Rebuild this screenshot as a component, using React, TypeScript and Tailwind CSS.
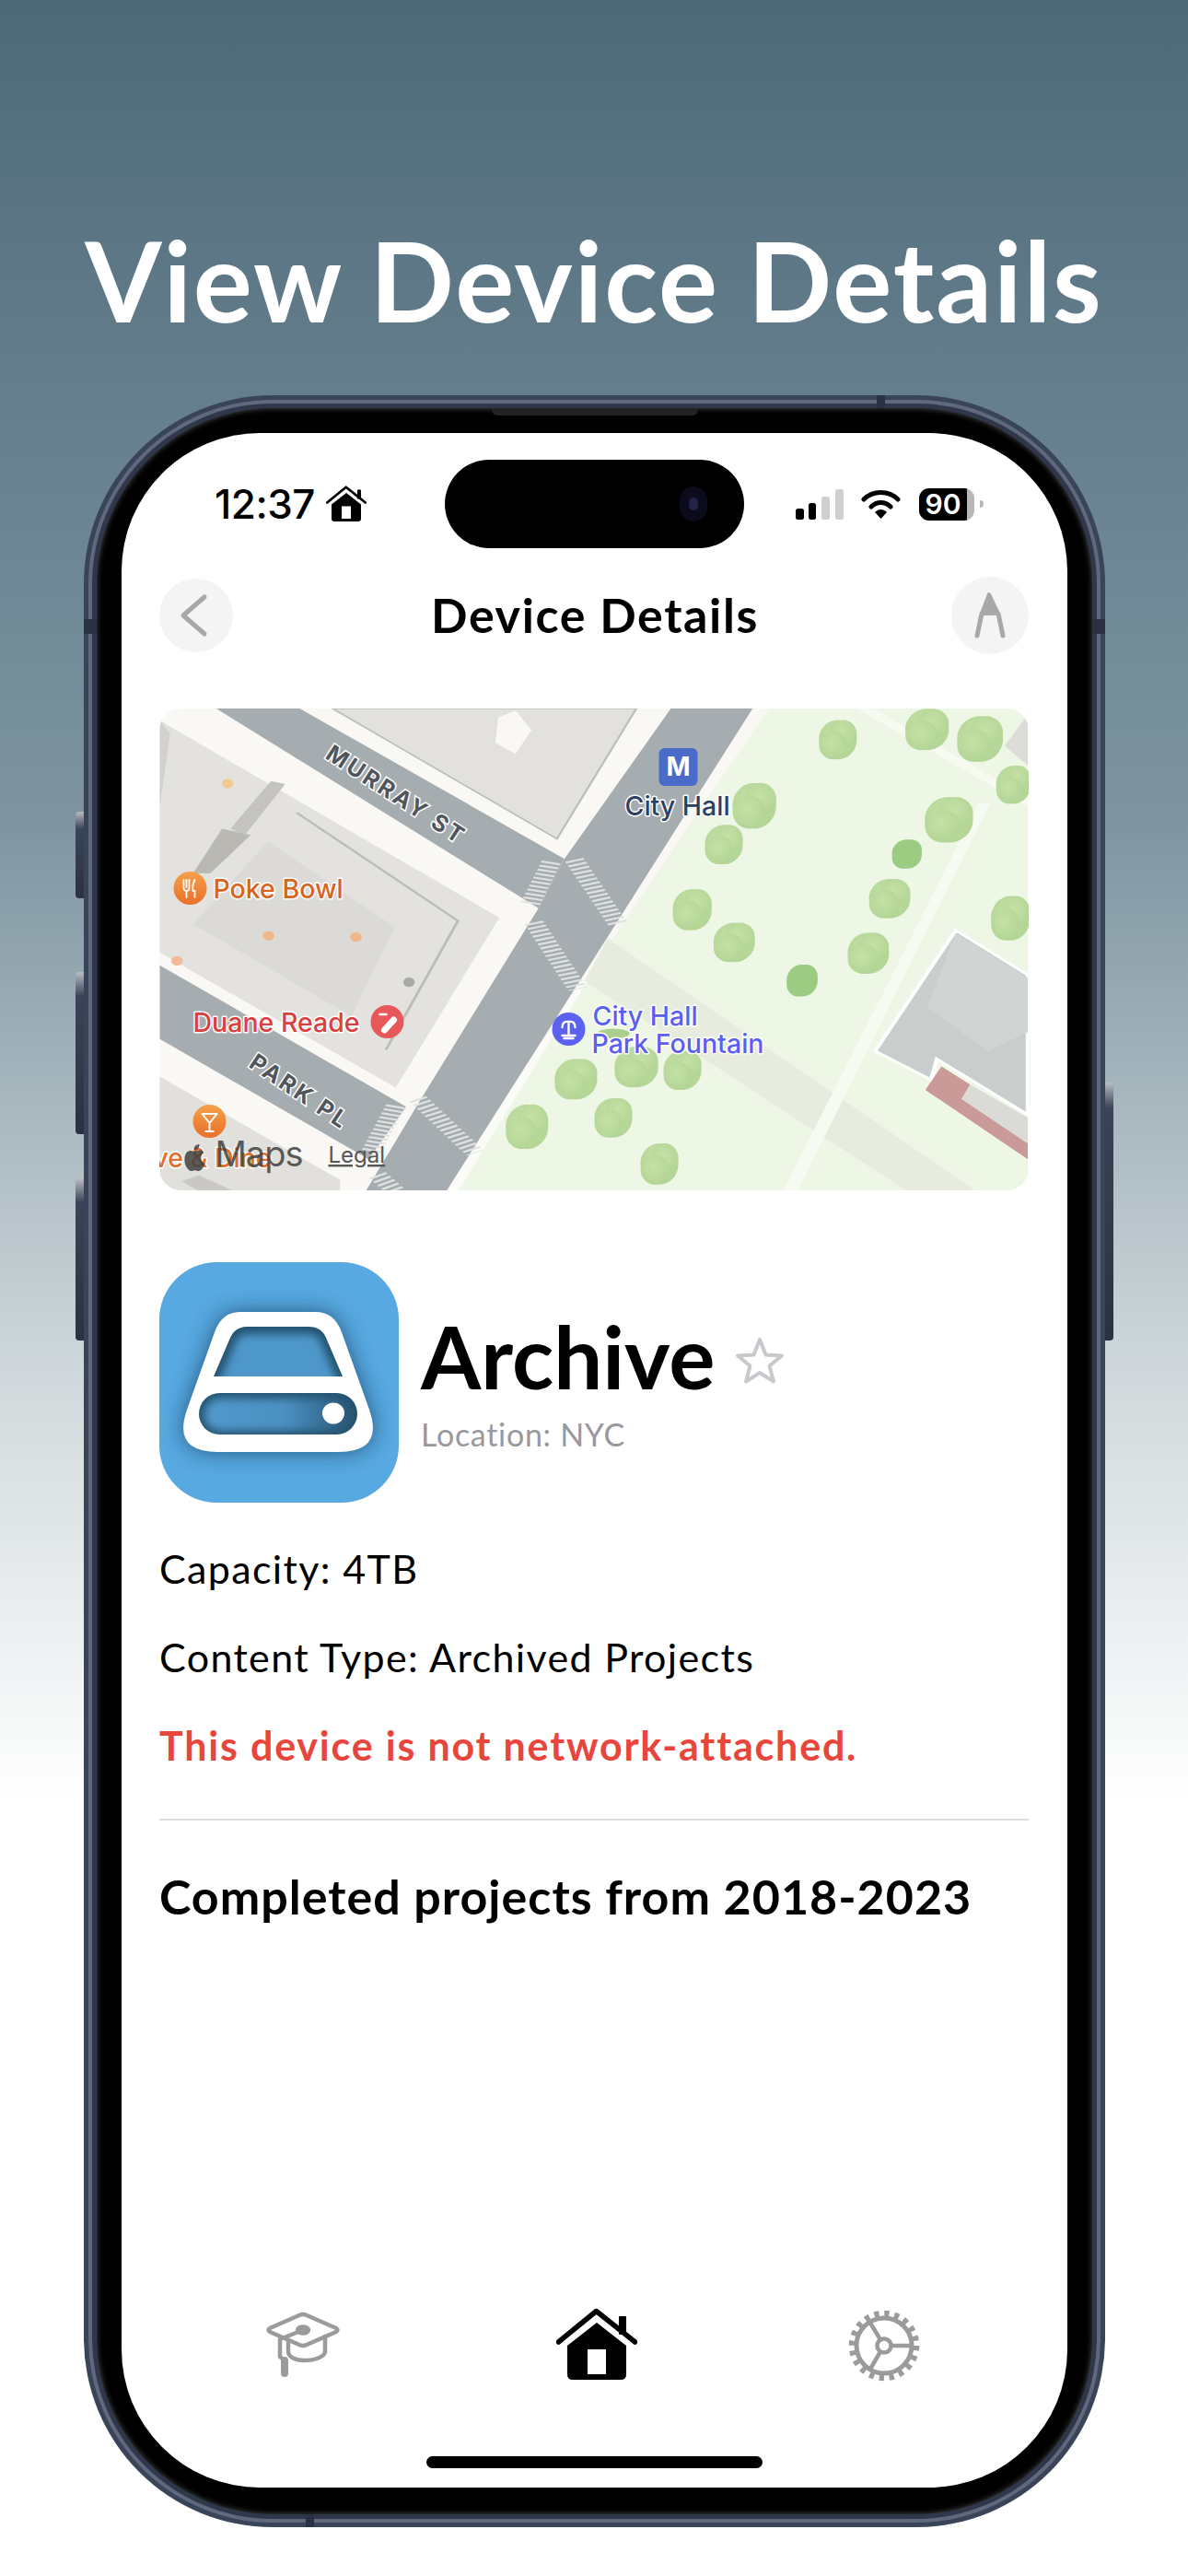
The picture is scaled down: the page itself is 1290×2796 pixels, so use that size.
const trees: [number, number, number, number, boolean?][] = [
  [1200, 120, 33, 62],
  [1355, 88, 38, 65],
  [1447, 118, 40, 72],
  [1505, 262, 30, 60],
  [1055, 328, 38, 72],
  [1002, 450, 33, 62],
  [1393, 372, 42, 72],
  [1320, 480, 26, 46, true],
  [1290, 620, 36, 62],
  [947, 655, 34, 65],
  [1020, 758, 36, 62],
  [1253, 792, 36, 65],
  [1138, 878, 27, 50, true],
  [1500, 682, 34, 70],
  [745, 1188, 37, 64],
  [850, 1150, 38, 64],
  [930, 1160, 33, 62],
  [810, 1310, 33, 62],
  [660, 1338, 37, 70],
  [890, 1455, 33, 65],
];

const crossings = [
  "M702 505 L665 640",
  "M742 498 L818 700",
  "M672 695 L748 905",
  "M432 1272 L388 1420",
  "M470 1250 L570 1420",
  "M400 1490 L432 1540",
];

const halo = { paintOrder: "stroke" as const, stroke: "#fff", strokeWidth: 3, strokeLinejoin: "round" as const };

const MapView = () => {
  return (
    <svg viewBox="0 0 943 523" className="w-full h-full block" fontFamily="Inter, sans-serif">
      <defs>
        <radialGradient id="tree" cx="45%" cy="40%" r="70%">
          <stop offset="0%" stopColor="#c6e1a6" />
          <stop offset="100%" stopColor="#afd393" />
        </radialGradient>
        <linearGradient id="orange" x1="0" y1="0" x2="0" y2="1">
          <stop offset="0%" stopColor="#f5a04a" />
          <stop offset="100%" stopColor="#e9702a" />
        </linearGradient>
      </defs>
      <rect width="943" height="523" fill="#f9f8f4" />
      <g transform="translate(-13.75 -7.6) scale(.625 .345)">
        {/* park */}
        <path d="M1080 22 H1530 V1540 H540 L810 740 Z" fill="#eef6e6" />
        <path d="M800 745 L1440 1540 H1320 L760 880 Z" fill="#e7ecdf" />
        <path d="M1465 320 L1130 1540 H1105 L1445 320 Z" fill="#f6faf1" />
        <path d="M1262 22 L1530 300 V330 L1232 22 Z" fill="#f6faf1" />
        <path d="M765 880 L540 1540 H522 L745 880 Z" fill="#fbfcf8" />
        {/* building in the park */}
        <path d="M1405 720 L1530 860 V1300 L1440 1200 L1372 1125 L1362 1190 L1265 1100 Z" fill="#c9cecc" stroke="#fff" strokeWidth="7" />
        <path d="M1405 730 L1355 960 L1460 1100 L1530 1040 V870 Z" fill="#d0d4d2" />
        <path d="M1380 1148 L1430 1205 L1415 1250 L1530 1390 V1440 L1352 1222 Z" fill="#c99a98" />
        <path d="M1430 1205 L1530 1310 V1390 L1415 1250 Z" fill="#dadad6" />
        <path d="M1530 40 V200 L1490 140 Z" fill="#dcdcd8" />
        {/* blocks */}
        <path d="M322 22 H850 L712 432 Z" fill="#e2e1dd" stroke="#bdbdba" strokeWidth="4" />
        <path d="M610 50 L640 28 L668 90 L640 165 L605 130 Z" fill="#f9f8f4" />
        <path d="M22 60 L612 680 L432 1215 L22 790 Z" fill="#e3e2de" />
        <path d="M210 440 L430 710 L355 990 L80 700 Z" fill="#dbdad6" />
        <path d="M260 350 L540 690 L415 1095" fill="none" stroke="#bcbcb8" strokeWidth="5" />
        <path d="M22 60 L40 100 L22 330 Z" fill="#d2d1cd" />
        <path d="M130 400 L180 420 L110 540 L80 540 Z" fill="#b9b8b3" />
        <path d="M240 260 L170 420 L145 400 L215 250 Z" fill="#c4c3bf" />
        <path d="M22 1180 L335 1505 V1540 H22 Z" fill="#e1e0dc" />
        <path d="M60 1510 L90 1490 L150 1540 H90 Z" fill="#c9c8c4" />
        {/* roads */}
        <path d="M120 22 H265 L725 495 L680 650 Z" fill="#a6adb0" />
        <path d="M910 22 H1052 L520 1540 H380 L472 1262 L680 650 L725 495 Z" fill="#a6adb0" />
        <path d="M22 830 L450 1275 L385 1440 L22 1062 Z" fill="#a6adb0" />
        {crossings.map((d) => (
          <path key={d} d={d} fill="none" stroke="#dfe2e1" strokeWidth="34" strokeDasharray="6 7" />
        ))}
        {trees.map(([cx, cy, rx, ry, dark]) => (
          <g key={`${cx}-${cy}`} fill={dark ? "#9ccb82" : "url(#tree)"}>
            <ellipse cx={cx} cy={cy} rx={rx} ry={ry} />
            <ellipse cx={cx + rx * 0.28} cy={cy - ry * 0.28} rx={rx * 0.72} ry={ry * 0.72} />
            <ellipse cx={cx - rx * 0.25} cy={cy + ry * 0.28} rx={rx * 0.74} ry={ry * 0.72} />
          </g>
        ))}
        <ellipse cx="140" cy="258" rx="10" ry="15" fill="#f2c98e" />
        <ellipse cx="211" cy="737" rx="10" ry="15" fill="#f0b78b" />
        <ellipse cx="363" cy="741" rx="10" ry="15" fill="#f0b78b" />
        <ellipse cx="52" cy="816" rx="10" ry="15" fill="#f3b999" />
        <ellipse cx="455" cy="883" rx="10" ry="15" fill="#a9a9a7" />
        <ellipse cx="810" cy="1045" rx="28" ry="16" fill="#a9cf8c" />
      </g>

      <g fontWeight="700" fill="#50565c" stroke="#fff" strokeWidth="3" style={{ paintOrder: "stroke" }}>
        <text transform="translate(252 101) rotate(33)" textAnchor="middle" fontSize="25" letterSpacing="3">MURRAY ST</text>
        <text transform="translate(147 423) rotate(34)" textAnchor="middle" fontSize="25" letterSpacing="3">PARK PL</text>
      </g>

      <circle cx="33" cy="195" r="18" fill="url(#orange)" />
      <path d="M26 186 V194 Q26 198 29 198 V205 M29 186 V194 M32 186 V194 Q32 198 29 198 M38 186 Q35 192 36 198 H38 V205" fill="none" stroke="#fff" strokeWidth="1.8" strokeLinecap="round" />
      <text x="58" y="206" fontSize="28.5" fontWeight="500" fill="#d8641e" style={halo}>Poke Bowl</text>

      <text x="36" y="351" fontSize="28.5" fontWeight="500" fill="#d9403f" style={halo}>Duane Reade</text>
      <circle cx="247" cy="340" r="18" fill="#e8575a" />
      <path d="M239 332 H246" stroke="#fff" strokeWidth="2.5" strokeLinecap="round" />
      <path d="M244 349 L254 338" stroke="#fff" strokeWidth="7" strokeLinecap="round" />

      <rect x="542" y="43" width="42" height="41" rx="6" fill="#4a6cc8" />
      <text x="563" y="73" textAnchor="middle" fontSize="28" fontWeight="700" fill="#fff">M</text>
      <text x="505" y="116" fontSize="28.5" fontWeight="500" fill="#2e3f63" style={halo}>City Hall</text>

      <circle cx="444" cy="348" r="18" fill="#5b62f0" />
      <path d="M444 340 V355 M437 346 Q437 339 444 340 Q451 339 451 346 M437 355 H451 M439 358 H449" fill="none" stroke="#fff" strokeWidth="2.4" strokeLinecap="round" />
      <text x="470" y="344" fontSize="28.5" fontWeight="500" fill="#5a5ff0" style={halo}>City Hall</text>
      <text x="469" y="374" fontSize="28.5" fontWeight="500" fill="#5a5ff0" style={halo}>Park Fountain</text>

      <circle cx="54" cy="448" r="18" fill="url(#orange)" />
      <path d="M46 440 H62 L54 450 Z M54 450 V459 M49 459 H59" fill="none" stroke="#fff" strokeWidth="2" strokeLinejoin="round" />
      <text x="-7" y="498" fontSize="28.5" fontWeight="500" fill="#e0702b" style={halo}>ve &amp; Dine</text>

      <path d="M37 481 C33 479 28 480 27 488 C26 495 31 503 35 502 C37 501 39 501 41 502 C45 503 48 497 49 494 C44 492 43 485 48 482 C45 478 41 480 37 481 Z M37 479 C37 475 40 473 43 473 C43 477 41 479 37 479 Z" fill="#3f3f3f" opacity=".85" />
      <text x="60" y="497" fontSize="38" fill="#3f3f3f" fillOpacity=".85" letterSpacing="-1">Maps</text>
      <text x="183" y="493" fontSize="24" fill="#555" textDecoration="underline">Legal</text>
    </svg>
  );
};

const HomeGlyph = ({ className }: { className: string }) => {
  return (
    <svg viewBox="11 16 88 80" className={className}>
      <path d="M13.5 53 L54.5 19.5 L96.5 53" fill="none" stroke="#000" strokeWidth="5.5" strokeLinecap="round" strokeLinejoin="round" />
      <rect x="79" y="25" width="8" height="20" rx="1" fill="#000" />
      <path fillRule="evenodd" d="M55 32 L87 57 V88 Q87 94 81 94 H29 Q23 94 23 88 V57 Z M45 61 V88 H65 V61 Z" fill="#000" />
    </svg>
  );
};

const CapIcon = () => {
  return (
    <svg viewBox="0 0 120 110" className="w-[120px] h-[110px]" fill="none" stroke="#9b9b9b" strokeWidth="4.5" strokeLinecap="round" strokeLinejoin="round">
      <path d="M55 23 Q59 21 63 23 L95 37 Q98 39 95 41 L63 55 Q59 57 55 55 L23 41 Q20 39 23 37 Z" />
      <path d="M43 50 V62 C43 68 50 72 60 72 C72 72 83 68 83 62 V46" />
      <path d="M59 39 L34 49 V68 L39 72" />
      <ellipse cx="59" cy="39" rx="6" ry="3.5" fill="#9b9b9b" />
      <path d="M39 72 V86" strokeWidth="8" />
    </svg>
  );
};

const GearIcon = () => {
  return (
    <svg viewBox="0 0 120 110" className="w-[120px] h-[110px]" fill="none" stroke="#9b9b9b">
      <circle cx="55" cy="56" r="30" strokeWidth="5" />
      <circle cx="55" cy="56" r="34.5" strokeWidth="7.5" strokeDasharray="5.2 5.64" />
      <circle cx="55" cy="56" r="7.5" strokeWidth="4.5" />
      <path d="M62.5 56 H84 M51 49.5 L38 28 M51 62.5 L39 83" strokeWidth="4.5" />
    </svg>
  );
};

const DriveIcon = () => {
  const body = "M88 54 H170 Q190 54 198 76 L228 160 Q244 206 195 206 H63 Q14 206 30 160 L60 76 Q68 54 88 54 Z";
  return (
    <svg viewBox="0 0 260 261" className="w-[260px] h-[261px] shrink-0">
      <defs>
        <filter id="glow" x="-30%" y="-30%" width="160%" height="160%">
          <feGaussianBlur stdDeviation="12" />
        </filter>
        <filter id="soft" x="-30%" y="-30%" width="160%" height="160%">
          <feGaussianBlur stdDeviation="5" />
        </filter>
        <linearGradient id="slot" x1="0" y1="0" x2="1" y2="0">
          <stop offset="0%" stopColor="#5099cd" />
          <stop offset="55%" stopColor="#4b90c2" />
          <stop offset="100%" stopColor="#2a5675" />
        </linearGradient>
        <clipPath id="slotClip">
          <rect x="43" y="142" width="172" height="45" rx="22.5" />
        </clipPath>
        <clipPath id="winClip">
          <path d="M59 124 L77 82 Q82 70 96 70 H162 Q176 70 181 82 L199 124 Z" />
        </clipPath>
      </defs>
      <rect width="260" height="261" rx="62" fill="#58a9e1" />
      <path d={body} fill="#1c4a6d" opacity=".85" filter="url(#glow)" />
      <path d={body} fill="#fff" />
      <g clipPath="url(#winClip)">
        <rect x="50" y="64" width="160" height="64" fill="#24536f" />
        <path d="M62 136 L84 84 Q88 78 98 78 H160 Q170 78 174 84 L196 136 Z" fill="#4e97ca" filter="url(#soft)" />
      </g>
      <g clipPath="url(#slotClip)">
        <rect x="43" y="142" width="172" height="45" fill="#24536f" />
        <rect x="49" y="148" width="160" height="35" rx="17" fill="url(#slot)" filter="url(#soft)" />
      </g>
      <ellipse cx="189" cy="164" rx="12" ry="11.5" fill="#fff" />
    </svg>
  );
};

const Band = ({ className }: { className: string }) => {
  return <div className={`absolute bg-[#2a3142] ${className}`} />;
};

const App = () => {
  return (
    <div className="w-[1290px] h-[2796px] overflow-hidden bg-[linear-gradient(180deg,#4d6979_0%,#7e95a1_32%,#d2dadd_54%,#ffffff_70%)] font-['Lato',sans-serif]">
      <h1 className="h-[429px] pt-[229px] text-center text-white text-[120px] leading-[150px] font-bold tracking-[1.9px]">
        View Device Details
      </h1>

      <div className="relative ml-[91px] w-[1109px] h-[2314px]">
        {/* side buttons */}
        <div className="absolute left-[-9px] top-[452px] w-[12px] h-[94px] rounded-l-[4px] bg-gradient-to-b from-[#b9bdc4] via-[#3a4357] via-20% to-[#2a3142]" />
        <div className="absolute left-[-9px] top-[626px] w-[12px] h-[176px] rounded-l-[4px] bg-gradient-to-b from-[#b9bdc4] via-[#3a4357] via-15% to-[#2a3142]" />
        <div className="absolute left-[-9px] top-[850px] w-[12px] h-[176px] rounded-l-[4px] bg-gradient-to-b from-[#b9bdc4] via-[#3a4357] via-15% to-[#2a3142]" />
        <div className="absolute right-[-9px] top-[746px] w-[12px] h-[280px] rounded-r-[4px] bg-gradient-to-b from-[#b9bdc4] via-[#3a4357] via-10% to-[#2a3142]" />

        <div className="relative w-full h-full rounded-[205px] bg-[#3a4458] p-[5px]">
          <div className="w-full h-full rounded-[200px] bg-[#5f687c] p-[4px]">
            <div className="w-full h-full rounded-[196px] bg-[#2f384a] p-[5px]">
              <div className="w-full h-full rounded-[191px] bg-black p-[27px] pb-[29px] shadow-[inset_0_0_6px_rgba(255,255,255,0.3)]">
                <div className="flex flex-col w-full h-full rounded-[150px] bg-white overflow-hidden">
                  {/* status bar */}
                  <div className="flex items-center h-[96px] mt-[29px] pl-[101px] pr-[91px] text-black">
                    <div className="flex items-center gap-[12px] w-[280px]">
                      <span className="text-[44px] leading-none font-medium font-['Inter',sans-serif] tracking-[-0.5px]">12:37</span>
                      <HomeGlyph className="w-[44px] h-[40px]" />
                    </div>
                    <div className="w-[325px] h-[96px] rounded-full bg-black flex items-center justify-end pr-[40px] shrink-0 -ml-[30px]">
                      <div className="w-[30px] h-[38px] rounded-full bg-[#0b0b1c] flex items-center justify-center">
                        <div className="w-[10px] h-[14px] rounded-full bg-[#23234a]" />
                      </div>
                    </div>
                    <div className="flex items-center ml-auto">
                      <svg viewBox="0 0 52 33" className="w-[52px] h-[33px]">
                        <rect x="0" y="21" width="9" height="12" rx="2.5" fill="#000" />
                        <rect x="14" y="15" width="8" height="18" rx="2.5" fill="#000" />
                        <rect x="28" y="8" width="9" height="25" rx="2.5" fill="#cfcfcf" />
                        <rect x="43" y="0" width="9" height="33" rx="2.5" fill="#cfcfcf" />
                      </svg>
                      <svg viewBox="0 0 43 32" className="w-[43px] h-[32px] ml-[19px]">
                        <path d="M3 11 C13 1 30 1 40 11 M11 19 C17 13 26 13 32 19" fill="none" stroke="#000" strokeWidth="5" strokeLinecap="round" />
                        <path d="M15 25 L21.5 32 L28 25 C24 21 19 21 15 25 Z" fill="#000" />
                      </svg>
                      <div className="relative ml-[20px] w-[60px] h-[35px] rounded-[11px] bg-[#b8b8b8] overflow-hidden">
                        <div className="flex items-center justify-center w-[52px] h-full bg-black text-white text-[30px] font-semibold font-['Inter',sans-serif]">
                          90
                        </div>
                      </div>
                      <div className="ml-[6px] w-[4px] h-[8px] rounded-r-full bg-[#b8b8b8]" />
                    </div>
                  </div>

                  {/* nav */}
                  <div className="flex items-center h-[84px] mt-[31px] pl-[41px] pr-[42px]">
                    <div className="flex items-center justify-center w-[80px] h-[80px] rounded-full bg-[#f4f4f4]">
                      <svg viewBox="0 0 80 80" className="w-[80px] h-[80px]" fill="none" stroke="#a8a8a8" strokeWidth="5" strokeLinecap="round" strokeLinejoin="round">
                        <path d="M49 20 L26 40 L49 60" />
                      </svg>
                    </div>
                    <div className="flex-1 pl-[6px] pb-[3px] text-center text-[52px] leading-none font-bold tracking-[1.6px]">Device Details</div>
                    <div className="w-[84px] h-[84px] rounded-full bg-[#f4f4f4]">
                      <svg viewBox="0 0 84 84" className="w-[84px] h-[84px]">
                        <path d="M41 19 L51 40 H33 Z" fill="#a8a8a8" stroke="#a8a8a8" strokeWidth="4" strokeLinejoin="round" />
                        <path d="M33 40 L28 64 M51 40 L56 64" fill="none" stroke="#a8a8a8" strokeWidth="5" strokeLinecap="round" />
                      </svg>
                    </div>
                  </div>

                  {/* map */}
                  <div className="mt-[59px] ml-[41px] mr-[42px] h-[523px] rounded-[24px] overflow-hidden">
                    <MapView />
                  </div>

                  {/* device header */}
                  <div className="flex mt-[78px] ml-[41px] mr-[42px]">
                    <DriveIcon />
                    <div className="ml-[24px]">
                      <div className="flex items-center mt-[52px] h-[100px]">
                        <span className="text-[94px] leading-none font-bold">Archive</span>
                        <svg viewBox="0 0 54 52" className="w-[54px] h-[52px] ml-[22px] mt-[9px]">
                          <path d="M27 3 L33.5 19.5 L51 20.5 L37.5 31.5 L42 48.5 L27 39 L12 48.5 L16.5 31.5 L3 20.5 L20.5 19.5 Z" fill="none" stroke="#c8c8cd" strokeWidth="4" strokeLinejoin="round" />
                        </svg>
                      </div>
                      <div className="mt-[18px] text-[34px] leading-none tracking-[0.7px] text-[#98989d]">Location: NYC</div>
                    </div>
                  </div>

                  {/* details */}
                  <div className="ml-[41px] mr-[42px] mt-[48px] text-[43px] leading-[48px] text-black">
                    <p className="tracking-[1.35px]">Capacity: 4TB</p>
                    <p className="mt-[48px] tracking-[1.35px]">Content Type: Archived Projects</p>
                    <p className="mt-[48px] font-bold tracking-[1.8px] text-[#e8453c]">This device is not network-attached.</p>
                  </div>
                  <div className="ml-[41px] mr-[42px] mt-[55px] h-[2px] bg-[#dcdcdc]" />
                  <p className="ml-[41px] mr-[42px] mt-[54px] text-[52px] leading-[56px] font-bold tracking-[1px] text-black">Completed projects from 2018-2023</p>

                  {/* tab bar */}
                  <div className="mt-auto flex justify-between h-[110px] pl-[138px] pr-[134px]">
                    <CapIcon />
                    <div className="flex items-center justify-center w-[120px] h-[110px]">
                      <HomeGlyph className="w-[88px] h-[80px]" />
                    </div>
                    <GearIcon />
                  </div>
                  <div className="mt-[66px] mb-[21px] mx-auto w-[365px] h-[13px] rounded-full bg-black" />
                </div>
              </div>
            </div>
          </div>
          <Band className="left-[861px] top-0 w-[9px] h-[14px]" />
          <Band className="left-[241px] bottom-0 w-[9px] h-[14px]" />
          <Band className="right-0 top-[243px] w-[14px] h-[16px]" />
          <Band className="left-0 top-[243px] w-[14px] h-[16px]" />
          <div className="absolute left-[443px] top-[14px] w-[224px] h-[8px] rounded-b-[6px] bg-[#222]" />
        </div>
      </div>
    </div>
  );
};

export default App;
